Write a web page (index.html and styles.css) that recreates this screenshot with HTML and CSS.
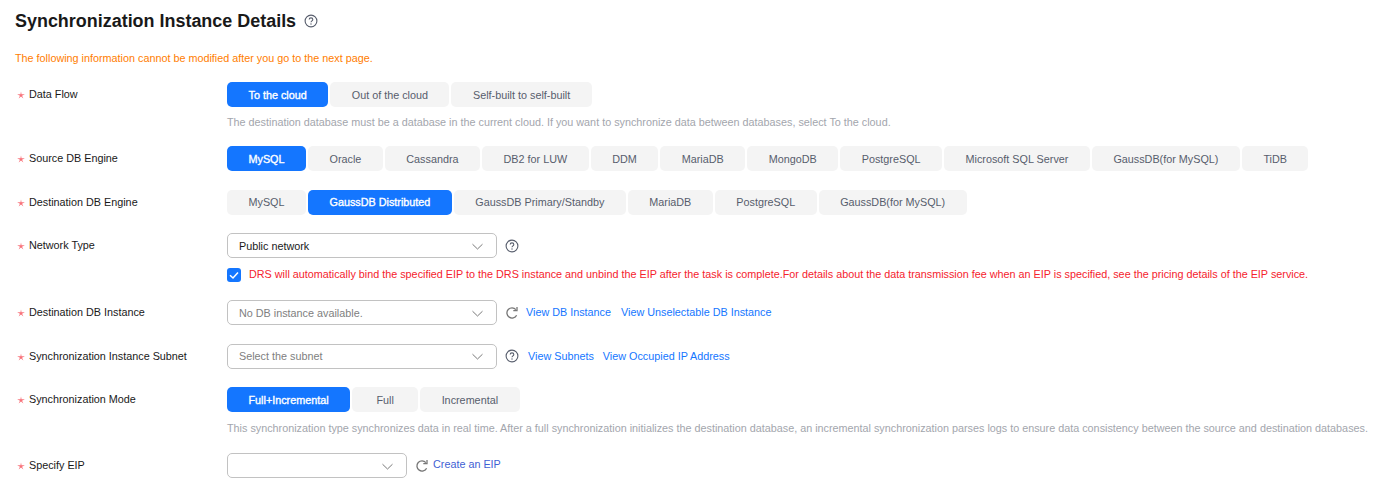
FILE: index.html
```html
<!DOCTYPE html>
<html lang="en">
<head>
<meta charset="utf-8">
<title>Synchronization Instance Details</title>
<link rel="stylesheet" href="styles.css">
</head>
<body>
<svg class="defs" width="0" height="0" aria-hidden="true">
  <symbol id="help" viewBox="0 0 14 14"><circle cx="7" cy="7" r="5.9" fill="none" stroke="#575d6c" stroke-width="1.1"/><path d="M5.2 5.6c0-1 .8-1.7 1.8-1.7s1.8.7 1.8 1.6c0 1.3-1.8 1.4-1.8 2.8" fill="none" stroke="#575d6c" stroke-width="1.1"/><circle cx="7" cy="10" r=".7" fill="#575d6c"/></symbol>
  <symbol id="chev" viewBox="0 0 12 8"><path d="M1.500 2.200 6.500 7l5-4.800" fill="none" stroke="#7a7a7a" stroke-width="1"/></symbol>
  <symbol id="refresh" viewBox="0 0 14 14"><path d="M11.6 9.200A5.100 5.100 0 1 1 10.900 3.600" fill="none" stroke="#777" stroke-width="1.300"/><path d="M12 1v3.700H8.300" fill="none" stroke="#777" stroke-width="1.300"/></symbol>
  <symbol id="star" viewBox="0 0 10 10"><path d="M5 .5 5.700 4.200 9.800 4.100 6.300 5.900 8 9.500 5 6.800 2 9.500 3.700 5.900.2 4.100 4.300 4.200Z" fill="#f8727a"/></symbol>
</svg>
<h1 class="title">Synchronization Instance Details <svg class="help title-help"><use href="#help"/></svg></h1>
<p class="warning">The following information cannot be modified after you go to the next page.</p>
<form class="form">
  <div class="row">
    <label class="label"><svg class="star"><use href="#star"/></svg>Data Flow</label>
    <div class="field">
      <div class="seg"><button type="button" class="btn on">To the cloud</button><button type="button" class="btn">Out of the cloud</button><button type="button" class="btn">Self-built to self-built</button></div>
      <p class="hint">The destination database must be a database in the current cloud. If you want to synchronize data between databases, select To the cloud.</p>
    </div>
  </div>
  <div class="row">
    <label class="label"><svg class="star"><use href="#star"/></svg>Source DB Engine</label>
    <div class="field">
      <div class="seg"><button type="button" class="btn on">MySQL</button><button type="button" class="btn">Oracle</button><button type="button" class="btn">Cassandra</button><button type="button" class="btn">DB2 for LUW</button><button type="button" class="btn">DDM</button><button type="button" class="btn">MariaDB</button><button type="button" class="btn">MongoDB</button><button type="button" class="btn">PostgreSQL</button><button type="button" class="btn">Microsoft SQL Server</button><button type="button" class="btn">GaussDB(for MySQL)</button><button type="button" class="btn">TiDB</button></div>
    </div>
  </div>
  <div class="row">
    <label class="label"><svg class="star"><use href="#star"/></svg>Destination DB Engine</label>
    <div class="field">
      <div class="seg"><button type="button" class="btn">MySQL</button><button type="button" class="btn on">GaussDB Distributed</button><button type="button" class="btn">GaussDB Primary/Standby</button><button type="button" class="btn">MariaDB</button><button type="button" class="btn">PostgreSQL</button><button type="button" class="btn">GaussDB(for MySQL)</button></div>
    </div>
  </div>
  <div class="row">
    <label class="label"><svg class="star"><use href="#star"/></svg>Network Type</label>
    <div class="field">
      <div class="line"><div class="select"><span class="value">Public network</span><svg class="chev"><use href="#chev"/></svg></div><svg class="help"><use href="#help"/></svg></div>
      <div class="check-line"><span class="check"><svg viewBox="0 0 14 14" width="14" height="14"><path d="M3 7.200 6 10l5-5.600" fill="none" stroke="#fff" stroke-width="1.500"/></svg></span><span class="danger">DRS will automatically bind the specified EIP to the DRS instance and unbind the EIP after the task is complete.For details about the data transmission fee when an EIP is specified, see the pricing details of the EIP service.</span></div>
    </div>
  </div>
  <div class="row">
    <label class="label"><svg class="star"><use href="#star"/></svg>Destination DB Instance</label>
    <div class="field">
      <div class="line"><div class="select"><span class="placeholder">No DB instance available.</span><svg class="chev"><use href="#chev"/></svg></div><svg class="refresh"><use href="#refresh"/></svg><a class="link first">View DB Instance</a><a class="link">View Unselectable DB Instance</a></div>
    </div>
  </div>
  <div class="row">
    <label class="label"><svg class="star"><use href="#star"/></svg>Synchronization Instance Subnet</label>
    <div class="field">
      <div class="line"><div class="select"><span class="placeholder">Select the subnet</span><svg class="chev"><use href="#chev"/></svg></div><svg class="help"><use href="#help"/></svg><a class="link after-help">View Subnets</a><a class="link tight">View Occupied IP Address</a></div>
    </div>
  </div>
  <div class="row">
    <label class="label"><svg class="star"><use href="#star"/></svg>Synchronization Mode</label>
    <div class="field">
      <div class="seg"><button type="button" class="btn on">Full+Incremental</button><button type="button" class="btn">Full</button><button type="button" class="btn">Incremental</button></div>
      <p class="hint long">This synchronization type synchronizes data in real time. After a full synchronization initializes the destination database, an incremental synchronization parses logs to ensure data consistency between the source and destination databases.</p>
    </div>
  </div>
  <div class="row">
    <label class="label"><svg class="star"><use href="#star"/></svg>Specify EIP</label>
    <div class="field">
      <div class="line"><div class="select small"><span class="value"></span><svg class="chev"><use href="#chev"/></svg></div><svg class="refresh"><use href="#refresh"/></svg><a class="link create">Create an EIP</a></div>
    </div>
  </div>
</form>
</body>
</html>
```
FILE: styles.css
```css
* { box-sizing: border-box; }
html, body { margin: 0; padding: 0; }
body {
  background: #fff;
  color: #191919;
  font: 10.8px/18px "Liberation Sans", Arial, sans-serif;
  height: 493px;
  overflow: hidden;
  padding: 0 0 0 15px;
}
.defs { position: absolute; }
.title {
  display: flex;
  align-items: center;
  margin: 0;
  padding-top: 9px;
  height: 32px;
  font-size: 17.96px;
  line-height: 22px;
  font-weight: 700;
}
.title-help { margin-left: 8px; margin-top: 1px; }
.help { width: 14px; height: 14px; flex: none; }
.warning {
  margin: 0;
  padding-top: 17px;
  height: 50px;
  line-height: 18px;
  color: #ff7d00;
}
.form { display: flex; flex-direction: column; }
.row { display: flex; margin-bottom: 18.5px; }
.label {
  width: 212px;
  flex: none;
  padding-left: 2px;
  display: flex;
  height: 24px;
  align-items: center;
  color: #191919;
  white-space: nowrap;
}
.star { width: 8px; height: 8px; margin-right: 4px; margin-top: 2px; flex: none; }
.field { display: flex; flex-direction: column; min-width: 0; }
.seg { display: flex; gap: 2px; white-space: nowrap; }
.btn {
  height: 25px;
  min-width: 66px;
  border: 0;
  border-radius: 5px;
  background: #f4f4f4;
  color: #575d6c;
  font: 10.8px "Liberation Sans", Arial, sans-serif;
  padding: 0 21.5px;
  white-space: nowrap;
}
.btn.on { background: #1476ff; color: #fff; -webkit-text-stroke: 0.35px #fff; }
.hint {
  margin: 6px 0 0;
  color: #a3a6ad;
  line-height: 18px;
  height: 14.5px;
  white-space: nowrap;
}
.hint.long { margin-top: 7px; height: 15.5px; }
.line { display: flex; align-items: center; height: 25px; white-space: nowrap; }
.select {
  width: 270px;
  height: 25px;
  flex: none;
  border: 1px solid #c2c2c2;
  border-radius: 5px;
  display: flex;
  align-items: center;
  justify-content: space-between;
  padding: 0 13px 0 11px;
}
.select.small { width: 180px; }
.value { color: #191919; }
.placeholder { color: #808080; }
.chev { width: 12px; height: 8px; }
.line > .help { margin-left: 8px; }
.refresh { width: 14px; height: 14px; margin-left: 8px; flex: none; }
.link { color: #1476ff; margin-left: 10px; margin-bottom: 1px; }
.link.first { margin-left: 7px; }
.link.after-help { margin-left: 9px; }
.link.tight { margin-left: 9px; }
.link.create { color: #3f5fd4; margin-left: 4px; margin-bottom: 3px; }
.check-line { display: flex; align-items: center; margin-top: 7px; height: 18px; white-space: nowrap; margin-bottom: -1.5px; }
.check {
  width: 14px;
  height: 14px;
  border-radius: 3px;
  background: #1476ff;
  flex: none;
  margin: 2px 8px 0 0;
  display: flex;
}
.danger { color: #f5222d; margin-top: -1px; }
```
